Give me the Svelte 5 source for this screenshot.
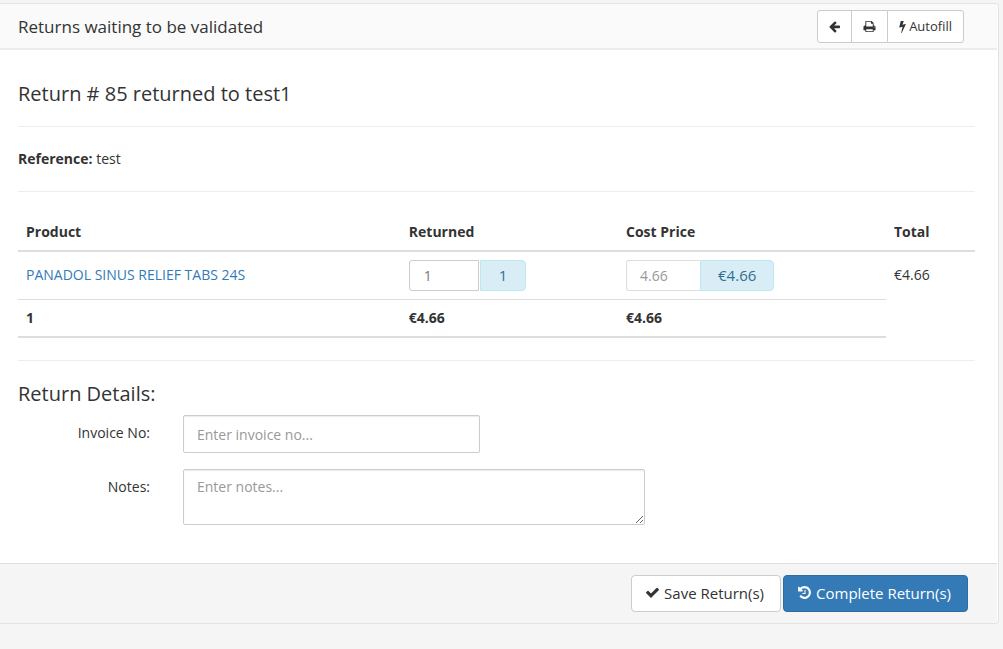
<script>
	// everything in the panel comes from this one return
	let ret = {
		id: 85,
		supplier: "test1",
		reference: "test",
		lines: [
			{ name: "PANADOL SINUS RELIEF TABS 24S", qty: 1, cost: 4.66 }
		]
	};

	let invoice = "";
	let notes = "";
	let returned = ret.lines.map(() => "");
	let saved = false;

	const money = (n) => "€" + n.toFixed(2);

	$: total = ret.lines.reduce((sum, l) => sum + l.qty * l.cost, 0);

	// fill the quantity boxes with what was expected
	function autofill() {
		returned = ret.lines.map((l) => String(l.qty));
	}

	function save() {
		saved = true;
	}

	// Font Awesome shapes
	const icons = {
		back: "M1664 896v128q0 53-32.5 90.5t-84.5 37.5h-704l293 294q38 36 38 90t-38 90l-75 76q-37 37-90 37-52 0-91-37l-651-652q-37-37-37-90 0-52 37-91l651-650q38-38 91-38 52 0 90 38l75 74q38 38 38 91t-38 91l-293 293h704q52 0 84.5 37.5t32.5 90.5z",
		print: "M448 1536h896v-256h-896v256zm0-640h896v-384h-160q-40 0-68-28t-28-68v-160h-640v640zm1152 64q0-26-19-45t-45-19-45 19-19 45 19 45 45 19 45-19 19-45zm128 0v416q0 13-9.5 22.5t-22.5 9.5h-224v160q0 40-28 68t-68 28h-960q-40 0-68-28t-28-68v-160h-224q-13 0-22.5-9.5t-9.5-22.5v-416q0-79 56.5-135.5t135.5-56.5h64v-544q0-40 28-68t68-28h672q40 0 88 20t76 48l152 152q28 28 48 76t20 88v256h64q79 0 135.5 56.5t56.5 135.5z",
		bolt: "M1333 566q18 20 7 44l-540 1157q-13 25-42 25-4 0-14-2-17-5-25.5-19t-4.5-30l197-808-406 101q-4 1-12 1-18 0-31-11-18-15-13-39l201-825q4-14 16-23t28-9h328q19 0 32 12.5t13 29.5q0 8-5 18l-171 463 396-98q8-2 12-2 19 0 34 15z",
		check: "M1671 566q0 40-28 68l-724 724-136 136q-28 28-68 28t-68-28l-136-136-362-362q-28-28-28-68t28-68l136-136q28-28 68-28t68 28l294 295 656-657q28-28 68-28t68 28l136 136q28 28 28 68z",
		history: "M1664 896q0 156-61 298t-164 245-245 164-298 61q-172 0-327-72.5t-264-204.5q-7-10-6.5-22.5t8.5-20.5l137-138q10-9 25-9 16 2 23 12 73 95 179 147t225 52q104 0 198.5-40.5t163.5-109.5 109.5-163.5 40.5-198.5-40.5-198.5-109.5-163.5-163.5-109.5-198.5-40.5q-98 0-188 35.5t-160 101.5l137 138q31 30 14 69-17 40-59 40h-448q-26 0-45-19t-19-45v-448q0-42 40-59 39-17 69 14l130 129q107-101 244.5-156.5t284.5-55.5q156 0 298 61t245 164 164 245 61 298zm-640-288v448q0 14-9 23t-23 9h-320q-14 0-23-9t-9-23v-64q0-14 9-23t23-9h224v-352q0-14 9-23t23-9h64q14 0 23 9t9 23z"
	};
</script>

<div class="panel">
	<header class="panel-heading">
		<h1>Returns waiting to be validated</h1>
		<div class="btn-group">
			<button type="button" class="btn-sm" aria-label="Back">
				<svg class="arrow" viewBox="128 0 1536 1792"><path d={icons.back} /></svg>
			</button>
			<button type="button" class="btn-sm" aria-label="Print">
				<svg viewBox="0 0 1792 1792"><path d={icons.print} /></svg>
			</button>
			<button type="button" class="btn-sm" on:click={autofill}>
				<svg class="bolt" viewBox="448 0 896 1792"><path d={icons.bolt} /></svg>
				Autofill
			</button>
		</div>
	</header>

	<main class="panel-body">
		<h2>Return # {ret.id} returned to {ret.supplier}</h2>
		<hr />
		<p><strong>Reference:</strong> {ret.reference}</p>
		<hr />

		<table>
			<thead>
				<tr>
					<th class="product">Product</th>
					<th class="returned">Returned</th>
					<th class="cost">Cost Price</th>
					<th class="total">Total</th>
				</tr>
			</thead>
			<tbody>
				{#each ret.lines as line, i}
					<tr>
						<td><a href="#product">{line.name}</a></td>
						<td>
							<div class="input-group">
								<input class="qty" aria-label="Returned" placeholder={line.qty} bind:value={returned[i]} />
								<span class="addon split">{line.qty}</span>
							</div>
						</td>
						<td>
							<div class="input-group">
								<input class="price" aria-label="Cost price" value={line.cost} disabled />
								<span class="addon">{money(line.cost)}</span>
							</div>
						</td>
						<td>{money(line.qty * line.cost)}</td>
					</tr>
				{/each}
			</tbody>
			<tfoot>
				<tr>
					<th>{ret.lines.length}</th>
					<th>{money(total)}</th>
					<th>{money(total)}</th>
				</tr>
			</tfoot>
		</table>
		<hr />

		<h2>Return Details:</h2>
		<form class="details">
			<label for="invoice">Invoice No:</label>
			<input id="invoice" class="control" placeholder="Enter invoice no..." bind:value={invoice} />
			<label for="notes">Notes:</label>
			<textarea id="notes" class="control" placeholder="Enter notes..." bind:value={notes}></textarea>
		</form>
	</main>

	<footer class="panel-footer">
		<button type="button" class="btn" on:click={save}>
			<svg viewBox="0 0 1792 1792"><path d={icons.check} /></svg>
			Save Return(s)
		</button>
		<button type="button" class="btn primary" disabled={saved}>
			<svg viewBox="0 0 1792 1792"><path d={icons.history} /></svg>
			Complete Return(s)
		</button>
	</footer>
</div>

<style>
	:global(body) {
		background: #f5f5f5;
	}
	:global(#app) {
		padding-top: 3px;
	}
	.panel, .panel * {
		box-sizing: border-box;
	}
	.panel {
		margin-right: 4px;
		padding-right: 1px;
		background: white;
		border: 1px solid #e3e3e3;
		border-left: none;
		border-radius: 0 4px 4px 0;
		font-family: "Open Sans", sans-serif;
		font-size: 14px;
		line-height: 21px;
		color: #333;
	}
	.panel-heading {
		display: flex;
		align-items: center;
		justify-content: space-between;
		height: 46px;
		padding: 0 33px 0 18px;
		background: #fafafa;
		border-bottom: 2px solid #ececec;
	}
	h1, h2 {
		margin: 0;
		font-weight: 400;
	}
	h1 {
		font-size: 17px;
	}
	h2 {
		font-size: 20px;
		line-height: 21px;
	}
	p {
		margin: 0;
		line-height: 20px;
	}
	hr {
		margin: 22px 0;
		border: none;
		border-top: 1px solid #eee;
	}
	a {
		color: #337ab7;
		text-decoration: none;
	}
	button, input, textarea {
		margin: 0;
		font-family: inherit;
		color: inherit;
	}
	svg {
		width: 15px;
		height: 15px;
		fill: currentColor;
	}
	.btn-group {
		display: flex;
	}
	.btn-sm {
		display: flex;
		align-items: center;
		gap: 3px;
		height: 33px;
		padding: 0 11px;
		font-size: 13px;
		background: white;
		border: 1px solid #ccc;
	}
	.btn-sm svg {
		width: 13px;
		height: 13px;
	}
	.btn-sm .arrow {
		width: 11px;
	}
	.btn-sm .bolt {
		width: 7px;
	}
	.btn-sm + .btn-sm {
		margin-left: -1px;
	}
	.btn-sm:first-child {
		border-radius: 3px 0 0 3px;
	}
	.btn-sm:last-child {
		border-radius: 0 3px 3px 0;
	}

	.panel-body {
		padding: 33px 22px 38px 18px;
	}
	table {
		width: 100%;
		table-layout: fixed;
		border-spacing: 0;
	}
	th, td {
		padding: 8px;
		text-align: left;
	}
	th {
		padding-top: 7px;
	}
	td {
		line-height: 29px;
		vertical-align: top;
	}
	thead th, tfoot th {
		border-bottom: 2px solid #ddd;
	}
	/* the total column has no line under it */
	tbody td:not(:last-child) {
		border-bottom: 1px solid #ddd;
	}
	.product {
		width: 40%;
	}
	.returned {
		width: 22.7%;
	}
	.cost {
		width: 28%;
	}
	.input-group {
		display: flex;
		height: 31px;
	}
	.input-group input {
		padding: 0 14px;
		font-size: 14px;
		background: white;
		border: 1px solid #ccc;
		border-radius: 3px 0 0 3px;
	}
	.input-group .qty {
		width: 70px;
	}
	.input-group .price {
		width: 74px;
		padding: 0 13px;
		color: #999;
		border-color: #ddd;
		border-right: none;
	}
	.addon {
		padding: 0 17px;
		font-size: 15px;
		line-height: 29px;
		color: #31708f;
		background: #d9edf7;
		border: 1px solid #bce8f1;
		border-radius: 0 4px 4px 0;
	}
	.split {
		margin-left: 1px;
		padding: 0 18px;
	}

	.details {
		display: grid;
		grid-template-columns: 132px 1fr;
		gap: 16px 33px;
		margin-top: 11px;
	}
	label {
		padding-top: 7px;
		text-align: right;
	}
	.control {
		display: block;
		padding: 7px 13px;
		font-size: 14px;
		line-height: 20px;
		background: white;
		border: 1px solid #ccc;
		border-radius: 2px;
		box-shadow: inset 0 1px 1px rgba(0, 0, 0, 0.08);
	}
	input.control {
		width: 37.5%;
		height: 38px;
	}
	textarea {
		width: 58.33%;
		height: 56px;
		resize: both;
	}
	::placeholder {
		color: #999;
		opacity: 1;
	}
	.qty::placeholder {
		color: #777;
	}

	.panel-footer {
		display: flex;
		justify-content: flex-end;
		gap: 2px;
		padding: 11px 29px 11px 18px;
		background: #f5f5f5;
		border-top: 1px solid #ddd;
	}
	.btn {
		display: flex;
		align-items: center;
		gap: 4px;
		height: 37px;
		padding: 0 16px 2px 13px;
		font-size: 15px;
		background: white;
		border: 1px solid #ccc;
		border-radius: 4px;
	}
	.primary {
		color: white;
		background: #337ab7;
		border-color: #2e6da4;
	}
</style>
